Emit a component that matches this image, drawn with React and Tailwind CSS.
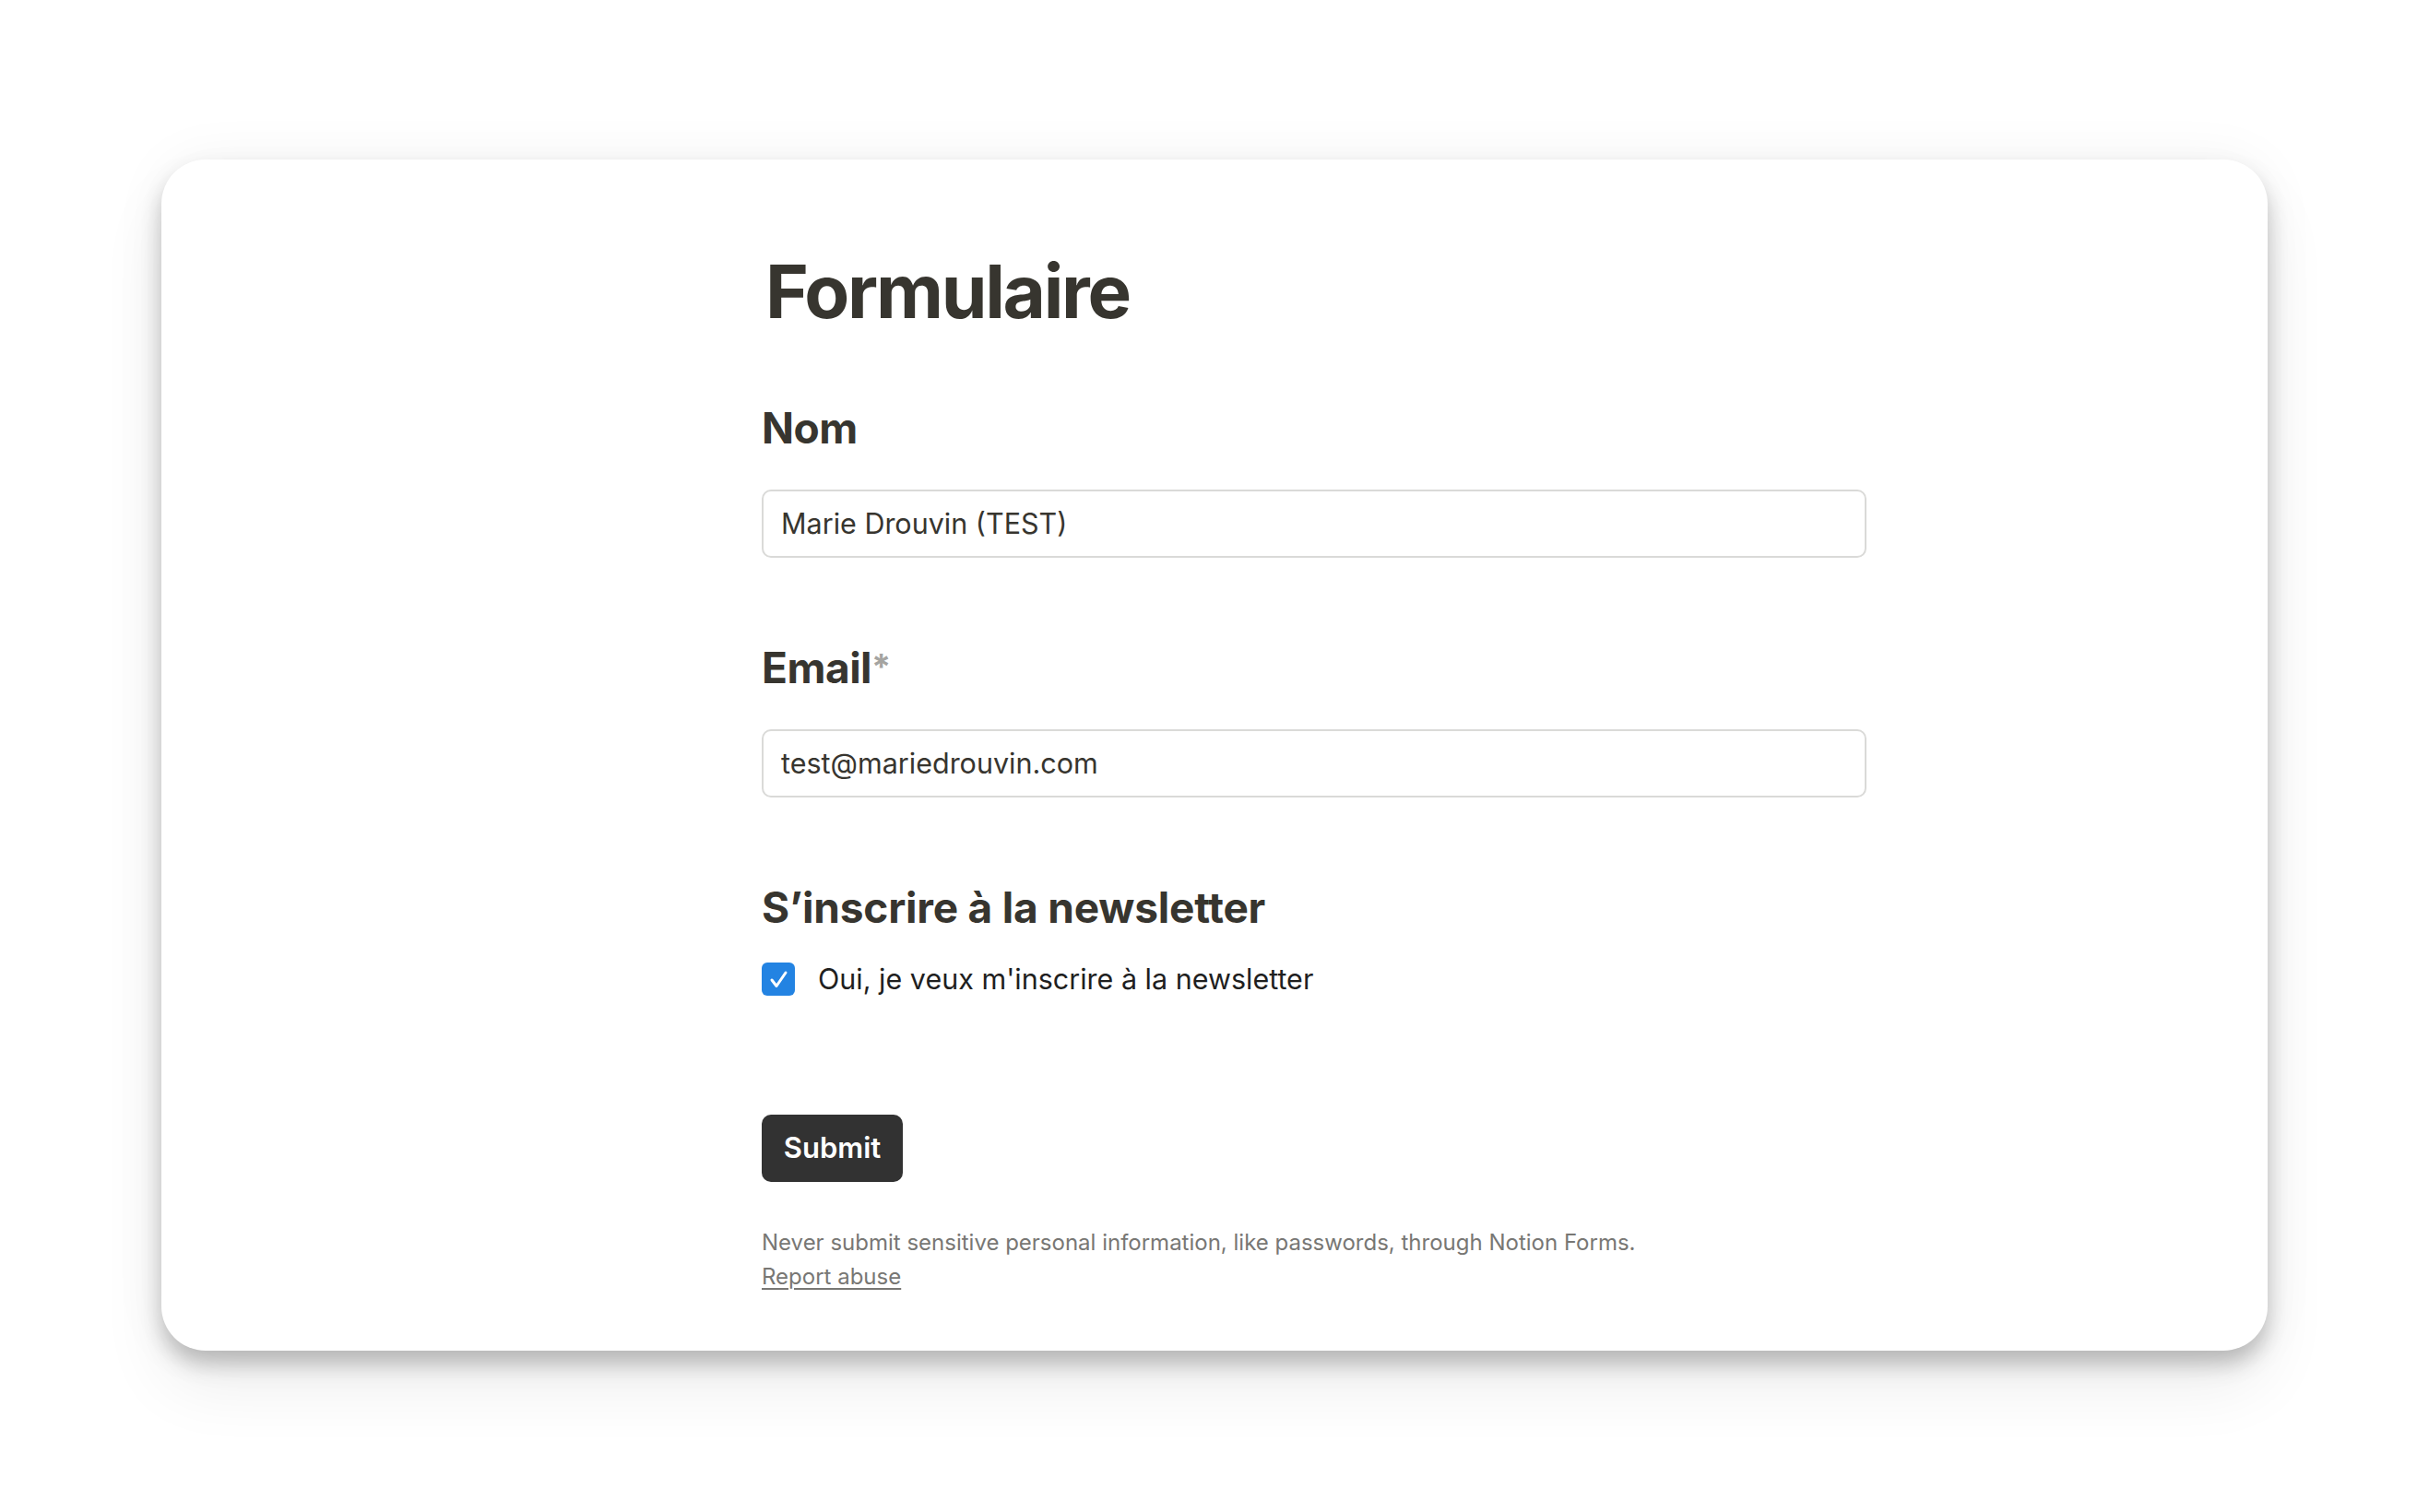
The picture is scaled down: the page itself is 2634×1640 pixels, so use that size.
import React from 'react';

const Field = ({ label, required, value }) => (
  <div>
    <div className="mt-[89px] h-[60px] text-[46px] font-bold leading-[60px] tracking-[-0.5px] text-[#37352f]">
      {label}
      {required && <span className="relative -top-[4px] text-[38px] font-bold leading-none text-[#a5a4a1]">*</span>}
    </div>
    <div className="mt-[37px] flex h-[74px] w-full items-center rounded-[10px] border-2 border-[#dadad8] bg-white px-[19px] text-[30.5px] text-[#37352f]">
      {value}
    </div>
  </div>
);

const App = () => {
  return (
    <div
      className="min-h-[1640px] w-full bg-white px-[175px] pt-[173px]"
      style={{ fontFamily: 'Inter, "Noto Sans", sans-serif' }}
    >
      <div className="h-[1292px] w-full rounded-[48px] bg-white pl-[651px] shadow-[0_14px_22px_rgba(0,0,0,0.22),0_40px_70px_rgba(0,0,0,0.07),0_0_60px_rgba(0,0,0,0.05)]">
        <div className="w-[1198px]">
          <h1 className="pt-[95px] pl-[4px] text-[80px] font-bold leading-[96px] tracking-[-2.3px] text-[#37352f]">
            Formulaire
          </h1>

          <div className="mt-[70px] text-[46px] font-bold leading-[60px] tracking-[-0.5px] text-[#37352f]">Nom</div>
          <div className="mt-[37px] flex h-[74px] w-full items-center rounded-[10px] border-2 border-[#dadad8] bg-white px-[19px] text-[30.5px] text-[#37352f]">
            Marie Drouvin (TEST)
          </div>

          <Field label="Email" required value="test@mariedrouvin.com" />

          <div className="mt-[89px] text-[46px] font-bold leading-[60px] tracking-[-0.2px] text-[#37352f]">
            S’inscrire à la newsletter
          </div>
          <div className="mt-[24px] flex h-[48px] items-center gap-[25px]">
            <div className="flex h-[36px] w-[36px] items-center justify-center rounded-[6px] bg-[#2383e2]">
              <svg width="36" height="36" viewBox="0 0 36 36" fill="none">
                <path d="M11 19l5 6.5L26 11" stroke="white" strokeWidth="3" strokeLinecap="round" strokeLinejoin="round" />
              </svg>
            </div>
            <span className="text-[30.5px] text-[#1f1f1f]">Oui, je veux m'inscrire à la newsletter</span>
          </div>

          <button className="mt-[123px] flex h-[73px] w-[153px] items-center justify-center rounded-[10px] bg-[#323232] text-[31px] font-semibold text-white">
            Submit
          </button>

          <p className="mt-[47px] text-[24px] leading-[37px] text-[#787774]">
            Never submit sensitive personal information, like passwords, through Notion Forms.
          </p>
          <a className="text-[24px] leading-[37px] text-[#787774] underline underline-offset-4">Report abuse</a>
        </div>
      </div>
    </div>
  );
};

export default App;
